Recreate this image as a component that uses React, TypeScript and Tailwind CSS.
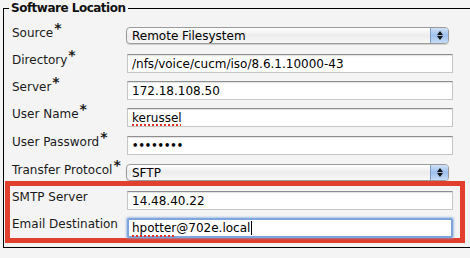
import React from "react";

const font = { fontFamily: '"DejaVu Sans", Verdana, sans-serif' };

function Star() {
  return <span className="relative -top-[4px] ml-[1px] text-[14px] font-bold leading-none">*</span>;
}

function Label({ text, star = true, w = "w-[115px]" }: { text: string; star?: boolean; w?: string }) {
  return (
    <div className={`${w} shrink-0 text-[12px] leading-[16px] text-[#1a1a1a] -mt-[2px]`}>
      {text}
      {star && <Star />}
    </div>
  );
}

function TextBox({ children, focus = false }: { children?: React.ReactNode; focus?: boolean }) {
  if (focus) {
    return (
      <div className="w-[326px] h-[20px] rounded-[2px] border-2 border-[#7ea6dd] shadow-[0_0_2px_1px_rgba(120,160,220,0.6)] bg-white flex items-center pl-[3px] text-[12px] text-black">
        {children}
      </div>
    );
  }
  return (
    <div className="w-[326px] h-[19px] border border-[#c6c6c6] border-t-[#8e8e8e] shadow-[inset_0_1px_1px_rgba(0,0,0,0.12)] bg-white flex items-center pl-[4px] text-[12px] leading-none text-black">
      {children}
    </div>
  );
}

function Select({ value }: { value: string }) {
  return (
    <div className="w-[323px] h-[17px] rounded-[4px] border border-[#9a9a9a] bg-gradient-to-b from-[#ffffff] via-[#ececec] to-[#f8f8f8] flex items-center overflow-hidden shadow-[0_1px_1px_rgba(0,0,0,0.15)]">
      <div className="flex-1 pl-[5px] text-[12px] leading-none text-black">{value}</div>
      <div className="w-[18px] h-full border-l border-[#7f9cc4] bg-gradient-to-b from-[#cfe0f6] via-[#9dc0ec] to-[#c8dcf6] flex flex-col items-center justify-center gap-[1px]">
        <svg width="6" height="4" viewBox="0 0 6 4"><path d="M3 0 L6 4 L0 4 Z" fill="#111" /></svg>
        <svg width="6" height="4" viewBox="0 0 6 4"><path d="M0 0 L6 0 L3 4 Z" fill="#111" /></svg>
      </div>
    </div>
  );
}

export default function App() {
  return (
    <div className="w-[470px] h-[258px] bg-[#f4f4f4] overflow-hidden" style={font}>
      <fieldset className="ml-[3px] mt-0 w-[490px] border border-black pl-[1px] pb-[4px] pt-[11px]">
        <legend className="ml-[4px] px-[2px] text-[12px] leading-[16px] font-bold text-[#111] tracking-[-0.5px]">
          Software Location
        </legend>
        <div className="flex flex-col">
          <div className="flex h-[27px] pl-[7px]">
            <Label text="Source" w="w-[114px]" />
            <Select value="Remote Filesystem" />
          </div>
          <div className="flex h-[27px] pl-[7px]">
            <Label text="Directory" />
            <TextBox>/nfs/voice/cucm/iso/8.6.1.10000-43</TextBox>
          </div>
          <div className="flex h-[27px] pl-[7px]">
            <Label text="Server" />
            <TextBox>172.18.108.50</TextBox>
          </div>
          <div className="flex h-[28px] pl-[7px]">
            <Label text="User Name" />
            <TextBox>
              <span className="underline decoration-dotted decoration-[#e0302a] decoration-[2px] underline-offset-[3px]">kerussel</span>
            </TextBox>
          </div>
          <div className="flex h-[28px] pl-[7px]">
            <Label text="User Password" />
            <TextBox>
              <span className="text-[10px] font-bold tracking-[0px]">••••••••</span>
            </TextBox>
          </div>
          <div className="flex h-[17px] pl-[7px]">
            <Label text="Transfer Protocol" w="w-[114px]" />
            <Select value="SFTP" />
          </div>
          <div className="w-[460px] border-[5px] border-[#e2402f] pt-[5px]">
            <div className="flex h-[27px] pl-[2px]">
              <Label text="SMTP Server" star={false} />
              <TextBox>14.48.40.22</TextBox>
            </div>
            <div className="flex h-[20px] pl-[2px]">
              <Label text="Email Destination" star={false} />
              <TextBox focus>
                <span className="underline decoration-dotted decoration-[#e0302a] decoration-[2px] underline-offset-[3px]">hpotter</span>
                <span>@702e.local</span>
                <span className="inline-block w-[1px] h-[14px] bg-black ml-[1px]" />
              </TextBox>
            </div>
          </div>
        </div>
      </fieldset>
    </div>
  );
}
